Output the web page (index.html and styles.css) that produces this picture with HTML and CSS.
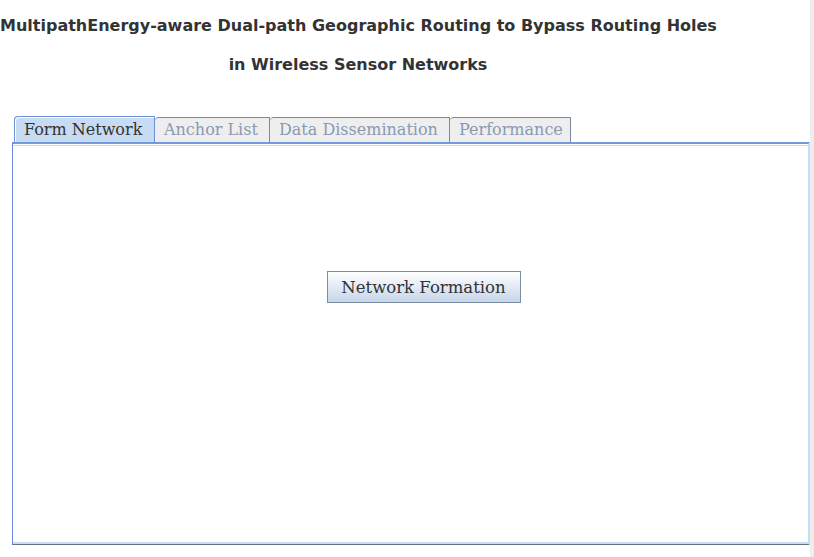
FILE: index.html
```html
<!DOCTYPE html>
<html>
<head>
<meta charset="utf-8">
<link rel="stylesheet" href="styles.css">
</head>
<body>
<div class="page">
  <h1 class="title">
    <span class="line1">MultipathEnergy-aware Dual-path Geographic Routing to Bypass Routing Holes</span>
    <span class="line2">in Wireless Sensor Networks</span>
  </h1>
  <div class="tabs">
    <div class="tab active">Form Network</div>
    <div class="tab">Anchor List</div>
    <div class="tab">Data Dissemination</div>
    <div class="tab">Performance</div>
  </div>
  <div class="panel">
    <button class="btn">Network Formation</button>
  </div>
</div>
</body>
</html>
```
FILE: styles.css
```css
html { background: #eeeeee; }
body { margin: 0; width: 810px; height: 557px; background: #ffffff; overflow: hidden; }
.page { display: flex; flex-direction: column; }
.title {
  margin: 0;
  width: 716px;
  padding-top: 6px;
  font-family: "DejaVu Sans", sans-serif;
  font-weight: bold;
  font-size: 16px;
  color: #333333;
  text-align: center;
  display: flex;
  flex-direction: column;
  line-height: 39px;
  white-space: nowrap;
}
.tabs {
  display: flex;
  margin-top: 32px;
  margin-left: 14px;
  height: 26px;
  align-items: flex-end;
}
.tab {
  font-family: "DejaVu Serif", serif;
  font-size: 16px;
  color: #8a9ab3;
  background: #eeeeee;
  border: 1px solid #7d8a99;
  border-bottom: none;
  border-left: none;
  border-top-left-radius: 4px;
  height: 25px;
  line-height: 23px;
  padding: 0 6px 0 9px;
  box-sizing: border-box;
  white-space: nowrap;
}
.tab:nth-child(2) { width: 115px; }
.tab:nth-child(3) { width: 180px; }
.tab:nth-child(4) { width: 121px; }
.tab.active {
  width: 141px;
  height: 26px;
  line-height: 25px;
  padding-left: 9px;
  color: #333333;
  background: #c7dbf2;
  border: 1px solid #6f8fd6;
  border-bottom: none;
  box-shadow: inset 1px 1px 0 #ffffff;
}
.panel {
  margin-left: 12px;
  width: 798px;
  height: 403px;
  box-sizing: border-box;
  border-top: 2px solid #7299dc;
  border-left: 1px solid #6a8ad8;
  border-right: 2px solid #c8dcf4;
  border-bottom: 1px solid #5f6f80;
  box-shadow: inset 0 1px 0 #ffffff, inset 0 2px 0 #c8dcf4, inset 0 -2px 0 #c8dcf4;
  display: flex;
  justify-content: center;
  padding-top: 127px;
  align-items: flex-start;
}
.btn {
  width: 194px;
  height: 32px;
  border: 1px solid #7b8ba0;
  background: linear-gradient(#ffffff, #e8eef7 40%, #c6d6ea);
  font-family: "DejaVu Serif", serif;
  font-size: 16.5px;
  color: #333333;
  padding: 0;
  margin-left: 26px;
}
```
